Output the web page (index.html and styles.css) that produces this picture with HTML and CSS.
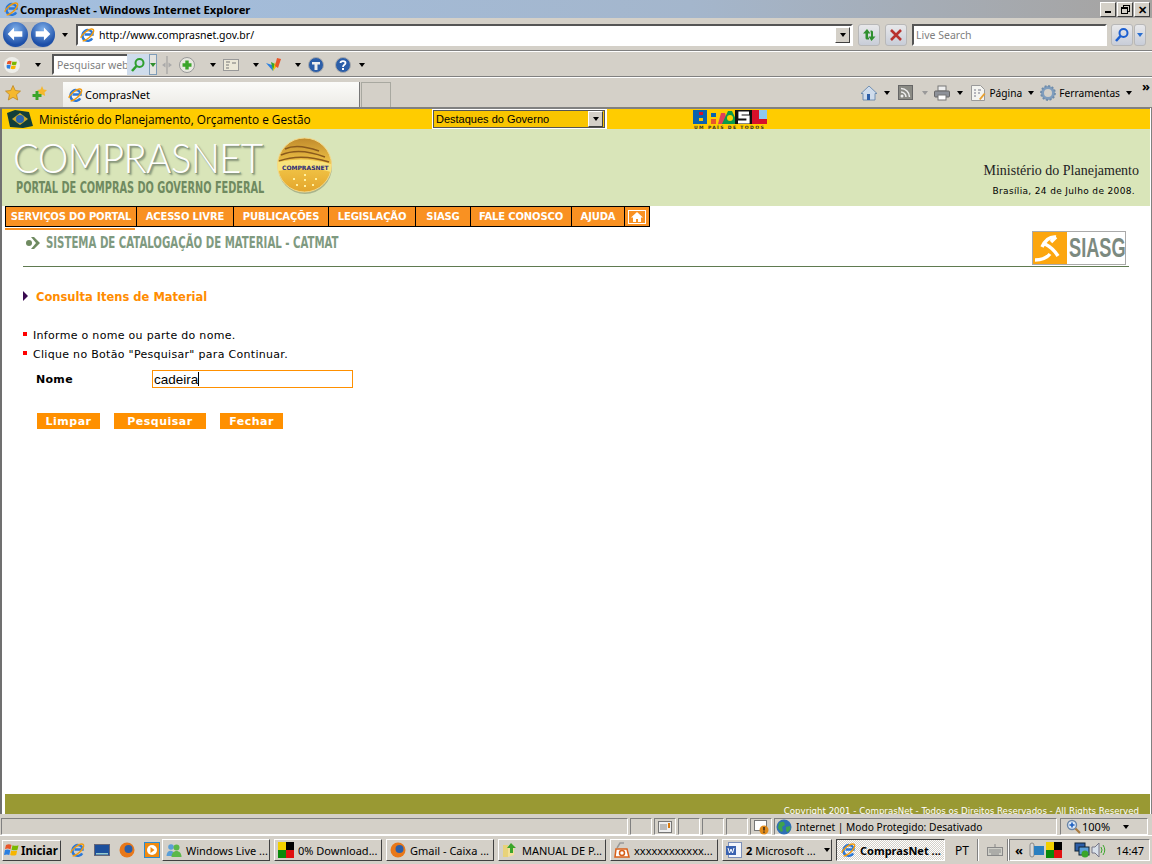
FILE: index.html
```html
<!DOCTYPE html>
<html lang="pt">
<head>
  <meta charset="UTF-8" />
  <title>ComprasNet - Windows Internet Explorer</title>
  <link rel="stylesheet" href="styles.css">
</head>
<body>

  <!-- icones -->
  <svg class="defs" width="0" height="0">
    <defs>
      <symbol id="ie" viewBox="0 0 16 16">
        <path d="M5.500 7.500h8C13.500 3.500 8.800 2 6 4 2.500 6.500 2.800 11.500 6 13.200c2.700 1.400 6 .5 7.200-1.800" fill="none" stroke="#2a78d8" stroke-width="2.400"/>
        <ellipse cx="8" cy="8" rx="8.300" ry="3.400" transform="rotate(-42 8 8)" fill="none" stroke="#f09a10" stroke-width="1.500" stroke-dasharray="17 5 14 0"/>
      </symbol>
      <symbol id="winflag" viewBox="0 0 16 16">
        <path d="M2 3q3-1.500 5.500 0l-1 4.500Q4 6 1 7z" fill="#e8562a"/>
        <path d="M8.500 3.200q3 1.200 6 0l-1 4.500q-3 1-6 0z" fill="#7ab800"/>
        <path d="M1 8q3-1 5.300.3l-1 4.700Q3 12 0 13z" fill="#2a7fe0"/>
        <path d="M7.200 8.500q3 1 6 0l-1 4.500q-3 1.200-6 0z" fill="#f7b500"/>
      </symbol>
      <symbol id="globe" viewBox="0 0 16 16">
        <circle cx="8" cy="8" r="7.500" fill="#2f6fb5"/>
        <path d="M3 4q3-2 5-1l1 3-3 2 1 4-2 1-3-4zM10 8l4-1 .5 3-3 3.500-1.500-2z" fill="#3fa34d"/>
      </symbol>
      <symbol id="glass" viewBox="0 0 16 16">
        <circle cx="9.500" cy="6" r="4" fill="none" stroke="currentColor" stroke-width="2"/>
        <path d="M6.500 9L2 14" stroke="currentColor" stroke-width="2.600"/>
      </symbol>
      <symbol id="navarrow" viewBox="0 0 24 24">
        <path d="M11 5l-7 7 7 7v-4h9V9h-9z" fill="#fff"/>
      </symbol>
    </defs>
  </svg>

  <div class="titlebar">
    <svg class="ico"><use href="#ie"/></svg>
    <span class="title-text">ComprasNet - Windows Internet Explorer</span>
    <div class="winbtns">
      <span class="winbtn"><i class="min-mark"></i></span>
      <span class="winbtn"><i class="max-mark"></i></span>
      <span class="winbtn close-mark">✕</span>
    </div>
  </div>

  <div class="addrbar">
    <div class="navbtns">
      <span class="navbtn"><svg width="22" height="22"><use href="#navarrow"/></svg></span>
      <span class="navbtn fwd"><svg width="22" height="22"><use href="#navarrow"/></svg></span>
    </div>
    <i class="caret nav-caret"></i>
    <div class="field addr-field">
      <svg class="ico"><use href="#ie"/></svg>
      <span class="addr-url">http://www.comprasnet.gov.br/</span>
      <span class="dropbtn"><i class="caret"></i></span>
    </div>
    <span class="toolbtn refresh-btn">
      <svg width="16" height="16" viewBox="0 0 16 16"><path d="M6 2L2 6.500h2.500V11q0 1.500 1.500 1.500h2v-2H7V6.500h2.500zM10.500 14l4-4.500H12V5q0-1.500-1.500-1.500h-1v2h.5v4H7.500z" fill="#2f8f2f"/></svg>
    </span>
    <span class="toolbtn stop-btn">
      <svg width="14" height="14" viewBox="0 0 14 14"><path d="M2 2l10 10M12 2L2 12" stroke="#b8322e" stroke-width="2.600"/></svg>
    </span>
    <div class="field live-field">Live Search</div>
    <span class="toolbtn live-go"><svg class="ico blue-ico"><use href="#glass"/></svg></span>
    <span class="toolbtn live-drop"><i class="caret caret-blue"></i></span>
  </div>

  <div class="linksbar">
    <svg class="ico win-ico"><use href="#winflag"/></svg>
    <i class="caret links-caret1"></i>
    <div class="field web-field">Pesquisar web</div>
    <span class="web-go"><svg class="ico green-ico"><use href="#glass"/></svg></span>
    <span class="web-drop"><i class="caret caret-green"></i></span>
    <svg class="grip" width="10" height="18" viewBox="0 0 10 18"><path d="M5 0v18" stroke="#999"/><path d="M3.500 6.500v5L0 9zM6.500 6.500v5L10 9z" fill="#aaa"/></svg>
    <svg class="ico plus-ico" viewBox="0 0 16 16"><circle cx="8" cy="8" r="7.500" fill="#e8e8e0" stroke="#999"/><path d="M8 3.500v9M3.500 8h9" stroke="#3aa52a" stroke-width="3.400"/></svg>
    <i class="caret links-caret2"></i>
    <svg class="ico card-ico" viewBox="0 0 16 16"><rect x=".5" y="2.500" width="15" height="11" fill="#ece8d8" stroke="#999"/><path d="M3 5h4M3 8h3M3 11h3M9 6h4" stroke="#777"/></svg>
    <i class="caret links-caret3"></i>
    <svg class="ico multi-ico" viewBox="0 0 16 16"><path d="M0 6l6 2 1 6z" fill="#2a7fe0"/><path d="M7 14L5 5l4 2z" fill="#3aa52a"/><path d="M7 14l2-9 2 4z" fill="#f7c500"/><path d="M9 9l2-8 4 1-3 9z" fill="#e8562a"/></svg>
    <i class="caret links-caret4"></i>
    <svg class="ico round-ico" viewBox="0 0 16 16"><circle cx="8" cy="8" r="7.500" fill="#2c5ea8" stroke="#aaa"/><path d="M4 5h8v2.500H9.500V13h-3V7.500H4z" fill="#eee"/></svg>
    <span class="round-gap"></span>
    <svg class="ico help-ico" viewBox="0 0 16 16"><circle cx="8" cy="8" r="7.500" fill="#2c5ea8" stroke="#aaa"/><path d="M5.500 6C5.500 3.500 10.500 3.500 10.500 6 10.500 7.800 8 7.800 8 10" fill="none" stroke="#fff" stroke-width="1.800"/><rect x="7" y="11" width="2" height="2" fill="#fff"/></svg>
    <i class="caret links-caret5"></i>
  </div>

  <div class="tabbar">
    <svg class="ico star-ico" viewBox="0 0 16 16"><path d="M8 .5l2.300 5 5.200.6-3.900 3.500 1.100 5.400L8 12.300 3.300 15l1.100-5.400L.5 6.100l5.200-.6z" fill="#f5b82e" stroke="#b8801a" stroke-width=".7"/></svg>
    <svg class="ico addstar-ico" viewBox="0 0 16 16"><path d="M10 1l1.500 3.500 3.500.5-2.500 2.500.7 3.500L10 9.500 6.800 11l.7-3.500L5 5l3.500-.5z" fill="#f5b82e"/><path d="M5 6v9M.5 10.500h9" stroke="#3aa52a" stroke-width="3"/></svg>
    <div class="tab">
      <svg class="ico"><use href="#ie"/></svg>
      <span>ComprasNet</span>
    </div>
    <div class="newtab"></div>
    <div class="cmds">
      <svg class="ico" viewBox="0 0 16 16"><path d="M8 1L0 8.500h2V15h12V8.500h2z" fill="#cfdcec" stroke="#5a7fa8" stroke-width=".8"/><rect x="6" y="9" width="3" height="6" fill="#2c5ea8"/></svg>
      <i class="caret cmd-caret1"></i>
      <svg class="ico rss-ico" viewBox="0 0 16 16"><rect x=".5" y=".5" width="14" height="14" fill="#8a8a84" stroke="#666"/><circle cx="4" cy="11" r="1.500" fill="#eee"/><path d="M3 7a5 5 0 0 1 5 5M3 3.500a8.500 8.500 0 0 1 8.500 8.500" fill="none" stroke="#eee" stroke-width="1.500"/></svg>
      <i class="caret caret-dim cmd-caret2"></i>
      <svg class="ico print-ico" viewBox="0 0 16 16"><rect x="4" y="1" width="8" height="5" fill="#eee" stroke="#777"/><rect x=".5" y="6" width="15" height="6" rx="1" fill="#8d9199" stroke="#666"/><rect x="4" y="10" width="8" height="5" fill="#fff" stroke="#777"/></svg>
      <i class="caret cmd-caret3"></i>
      <svg class="ico page-ico" viewBox="0 0 16 16"><path d="M1.500.5h9l4 4v11h-13z" fill="#f4f4f0" stroke="#9a9a9a"/><path d="M4 5h2M4 8h2M4 11h2M8 5h3M8 8h2" stroke="#778"/><path d="M9 14l5-6 1.500 1-5 6z" fill="#e8a030"/></svg>
      <span class="cmd-label">Página</span>
      <i class="caret cmd-caret4"></i>
      <svg class="ico gear-ico" viewBox="0 0 16 16"><circle cx="8" cy="8" r="5.500" fill="none" stroke="#7f9dbd" stroke-width="3"/><circle cx="8" cy="8" r="7" fill="none" stroke="#6f8caa" stroke-width="1.800" stroke-dasharray="2 1.660"/></svg>
      <span class="cmd-label">Ferramentas</span>
      <i class="caret cmd-caret5"></i>
      <span class="more">»</span>
    </div>
  </div>

  <div class="page">
    <div class="gov-bar">
      <svg class="flag-ico" width="26" height="18" viewBox="0 0 26 18"><path d="M0 3l8-3 14 2 4 14-10 2L3 17z" fill="#123f3a"/><path d="M5 9l8-6 8 6-8 6z" fill="#c9a92c"/><circle cx="13" cy="9" r="4" fill="#2a65b0"/></svg>
      <span class="gov-name">Ministério do Planejamento, Orçamento e Gestão</span>
      <div class="gov-select">
        <span>Destaques do Governo</span>
        <span class="dropbtn"><i class="caret"></i></span>
      </div>
      <svg class="brasil" width="75" height="20" viewBox="0 0 75 20">
        <rect x="0" y="1" width="14" height="14" fill="#0a62ad"/>
        <rect x="6" y="3" width="4" height="3" fill="#d8102a"/>
        <rect x="6" y="9" width="4" height="3" fill="#f7c500"/>
        <rect x="18" y="4" width="5" height="4" fill="#0a62ad"/>
        <rect x="18" y="10" width="5" height="5" fill="#e8562a"/>
        <path d="M25 15l3-11h4l3 11z" fill="#e0405a"/>
        <path d="M29 15l6-13h4l6 13z" fill="#0a9a4a"/>
        <circle cx="37" cy="9" r="3" fill="#f7d500"/>
        <rect x="42" y="1" width="17" height="14" fill="#111"/>
        <path d="M56 4H47v4h8v5H45" fill="none" stroke="#fff" stroke-width="3.200"/>
        <rect x="59" y="1" width="7" height="14" fill="#d8102a"/>
        <rect x="66" y="1" width="8" height="9" fill="#8fc8f0"/>
        <rect x="66" y="10" width="8" height="5" fill="#d8102a"/>
        <text x="1" y="20" class="brasil-sub">UM PAÍS DE TODOS</text>
      </svg>
    </div>

    <div class="banner">
      <div class="brand">
        <div class="brand-name">COMPRASNET</div>
        <div class="brand-sub">PORTAL DE COMPRAS DO GOVERNO FEDERAL</div>
      </div>
      <svg class="medal" width="56" height="58" viewBox="0 0 56 58">
        <defs>
          <linearGradient id="gold" x1="0" y1="0" x2="0" y2="1">
            <stop offset="0" stop-color="#c08a2c"/>
            <stop offset=".5" stop-color="#f2c648"/>
            <stop offset="1" stop-color="#e3a52c"/>
          </linearGradient>
        </defs>
        <circle cx="28" cy="30" r="27" fill="#a9b48c"/>
        <circle cx="27.500" cy="28" r="27" fill="url(#gold)" stroke="#f4d98a"/>
        <path d="M8 12q12-6 34 2M4 18q18-8 44 2M2 24q22-8 50 1" fill="none" stroke="#8a5a1c" stroke-width="1.500"/>
        <path d="M1 25q26-6 53 2v8q-26-7-53-1z" fill="#f8e27c"/>
        <text x="5" y="33" class="medal-text">COMPRASNET</text>
        <path d="M27 38h2M16 42h2M27 43h2M38 42h2M27 49h2M19 48h2M35 48h2" stroke="#fff0a0" stroke-width="2"/>
      </svg>
      <div class="banner-right">
        <div class="ministry">Ministério do Planejamento</div>
        <div class="today">Brasília, 24 de Julho de 2008.</div>
      </div>
    </div>

    <nav class="mainnav">
      <a class="nav-first">SERVIÇOS DO PORTAL</a>
      <a class="nav-acesso">ACESSO LIVRE</a>
      <a class="nav-pub">PUBLICAÇÕES</a>
      <a class="nav-leg">LEGISLAÇÃO</a>
      <a class="nav-siasg">SIASG</a>
      <a class="nav-fale">FALE CONOSCO</a>
      <a class="nav-ajuda">AJUDA</a>
      <a class="nav-home">
        <svg width="18" height="14" viewBox="0 0 18 14"><rect x=".5" y=".5" width="17" height="13" fill="none" stroke="#fff"/><path d="M9 2L3 7.500h2V12h3V9h2v3h3V7.500h2z" fill="#fff"/></svg>
      </a>
    </nav>
    <div class="nav-mark"></div>

    <div class="sys-head">
      <svg class="sys-arrow" width="14" height="12" viewBox="0 0 14 12"><circle cx="3" cy="6" r="3" fill="#6f8a60"/><path d="M5 0h3l6 6-6 6H5l5-6z" fill="#6f8a60"/></svg>
      <span class="sys-title">SISTEMA DE CATALOGAÇÃO DE MATERIAL - CATMAT</span>
      <div class="siasg">
        <svg width="34" height="32" viewBox="0 0 34 32"><rect width="34" height="32" fill="#fca60f"/><path d="M9 15q5-11 14-10M23 5l-5 5M12 12q8 4 13 12M2 28q10 0 15-6" fill="none" stroke="#fff" stroke-width="3.500"/></svg>
        <span>SIASG</span>
      </div>
    </div>

    <div class="content">
      <h2 class="section-title"><i class="tri"></i>Consulta Itens de Material</h2>
      <ul class="hints">
        <li>Informe o nome ou parte do nome.</li>
        <li>Clique no Botão "Pesquisar" para Continuar.</li>
      </ul>
      <div class="form-row">
        <label class="form-label">Nome</label>
        <div class="text-input">cadeira<i class="text-caret"></i></div>
      </div>
      <div class="actions">
        <button class="act act-small">Limpar</button>
        <button class="act act-big">Pesquisar</button>
        <button class="act act-small">Fechar</button>
      </div>
    </div>

    <footer class="page-foot">
      <span>Copyright 2001 - ComprasNet - Todos os Direitos Reservados - All Rights Reserved</span>
    </footer>
  </div>

  <div class="statusbar">
    <div class="cell cell-main"></div>
    <div class="cell cell-s"></div>
    <div class="cell cell-s"><svg class="ico" viewBox="0 0 16 16"><rect x="1.500" y="2.500" width="13" height="11" fill="#eee" stroke="#777"/><path d="M3 6h7M3 8h7M3 10h7" stroke="#888"/><path d="M12 4v5" stroke="#d87a10" stroke-width="2"/></svg></div>
    <div class="cell cell-s"></div>
    <div class="cell cell-s"></div>
    <div class="cell cell-s"></div>
    <div class="cell cell-s"><svg class="ico" viewBox="0 0 16 16"><rect x="1.500" y="1.500" width="12" height="10" fill="#fff" stroke="#777"/><circle cx="11" cy="11" r="4.500" fill="#e08a1a"/><path d="M11 8v3.500M11 12.500v1.200" stroke="#222" stroke-width="1.400"/></svg></div>
    <div class="cell cell-zone">
      <svg class="ico"><use href="#globe"/></svg>
      <span>Internet | Modo Protegido: Desativado</span>
    </div>
    <div class="cell cell-zoom">
      <svg class="ico" viewBox="0 0 16 16"><circle cx="7" cy="6" r="4.500" fill="#dce8f5" stroke="#6a86a8" stroke-width="1.400"/><path d="M7 3.500v5M4.500 6h5" stroke="#1c5fc0" stroke-width="1.600"/><path d="M10.500 9.500L15 14" stroke="#a87a40" stroke-width="2.200"/></svg>
      <span>100%</span>
      <i class="caret zoom-caret"></i>
    </div>
  </div>

  <div class="taskbar">
    <button class="start"><svg class="ico"><use href="#winflag"/></svg>Iniciar</button>
    <div class="quick">
      <svg class="ico"><use href="#ie"/></svg>
      <svg class="ico" viewBox="0 0 16 16"><rect x=".5" y="2.500" width="15" height="11" fill="#1c4f9c" stroke="#667"/><rect x="2" y="11" width="12" height="1.500" fill="#9cc"/></svg>
      <svg class="ico" viewBox="0 0 16 16"><circle cx="8" cy="8" r="7.500" fill="#e8781a"/><circle cx="9.500" cy="7" r="4" fill="#2c5ea8"/></svg>
      <svg class="ico" viewBox="0 0 16 16"><rect x=".5" y=".5" width="15" height="15" fill="#f08a10" stroke="#2c8ad0"/><circle cx="8" cy="8" r="5" fill="#fff"/><path d="M6.500 5l4 3-4 3z" fill="#f08a10"/></svg>
    </div>
    <div class="tasks">
      <button class="task"><svg class="ico" viewBox="0 0 16 16"><circle cx="5" cy="5" r="2.800" fill="#5a9fd8"/><path d="M.5 14c0-7 8-7 8 0z" fill="#5a9fd8"/><circle cx="10.500" cy="5.500" r="3" fill="#5bb84a"/><path d="M5.500 15c0-8 10-8 10 0z" fill="#5bb84a"/></svg><span>Windows Live ...</span></button>
      <button class="task"><svg class="ico" viewBox="0 0 16 16"><rect width="8" height="8" fill="#f2d000"/><rect x="8" width="8" height="8" fill="#000"/><rect y="8" width="8" height="8" fill="#0a8a0a"/><rect x="8" y="8" width="8" height="8" fill="#e01010"/></svg><span>0% Download...</span></button>
      <button class="task"><svg class="ico" viewBox="0 0 16 16"><circle cx="8" cy="8" r="7.500" fill="#e8781a"/><circle cx="9.500" cy="7" r="4" fill="#2c5ea8"/></svg><span>Gmail - Caixa ...</span></button>
      <button class="task"><svg class="ico" viewBox="0 0 16 16"><path d="M1 3h5v12H1z" fill="#e8d27a"/><path d="M6 15V5l6-2v10z" fill="#f2e09a"/><path d="M9 1l5 5h-3v5H8V6H5z" fill="#3aa52a"/></svg><span>MANUAL DE P...</span></button>
      <button class="task"><svg class="ico" viewBox="0 0 16 16"><path d="M2 7h11l2 8H1z" fill="#fff" stroke="#d8601a" stroke-width="1.500"/><circle cx="8" cy="11" r="2.500" fill="none" stroke="#d8601a" stroke-width="1.500"/><path d="M3 6l3-5h4" fill="none" stroke="#999" stroke-width="1.500"/></svg><span>xxxxxxxxxxxx...</span></button>
      <button class="task task-word"><svg class="ico" viewBox="0 0 16 16"><rect x="2.500" y=".5" width="13" height="15" fill="#f4f6fb" stroke="#7c8fb8"/><rect x="0" y="4" width="10" height="9" fill="#3a62b0"/><path d="M2 6l1.500 5 1.500-4 1.500 4L8 6" fill="none" stroke="#fff"/></svg><span><b>2</b> Microsoft ...</span><i class="caret"></i></button>
      <button class="task task-on"><svg class="ico"><use href="#ie"/></svg><span>ComprasNet ...</span></button>
    </div>
    <span class="lang">PT</span>
    <i class="tray-sep"></i>
    <svg class="ico kbd-ico" viewBox="0 0 16 16"><rect x=".5" y="5.500" width="15" height="8" fill="#cfcfc8" stroke="#888"/><path d="M2 8h12M2 10h12M4 12h8M8 2v3" stroke="#888"/></svg>
    <i class="tray-sep"></i>
    <div class="tray">
      <span class="tray-more">«</span>
      <svg class="ico" viewBox="0 0 16 16"><rect x="1" y="1" width="4" height="14" rx="2" fill="#d8d8d8" stroke="#888"/><rect x="5" y="4" width="10" height="9" fill="#2a7fc0"/></svg>
      <svg class="ico" viewBox="0 0 16 16"><rect width="8" height="8" fill="#f2d000"/><rect x="8" width="8" height="8" fill="#000"/><rect y="8" width="8" height="8" fill="#0a8a0a"/><rect x="8" y="8" width="8" height="8" fill="#e01010"/></svg>
      <svg class="ico tray-net" viewBox="0 0 16 16"><rect x="1" y="1" width="10" height="8" fill="#2c5ea8" stroke="#123"/><rect x="5" y="5" width="10" height="8" fill="#5a9fd8" stroke="#123"/><circle cx="11" cy="12" r="3.500" fill="#3aa52a"/></svg>
      <svg class="ico" viewBox="0 0 16 16"><path d="M1 5h3l4-4v14l-4-4H1z" fill="#d8e0ea" stroke="#778"/><path d="M10 5q2 3 0 6M12 3q3.500 5 0 10" fill="none" stroke="#3aa52a"/></svg>
      <span class="clock">14:47</span>
    </div>
  </div>

</body>
</html>
```
FILE: styles.css
```css
* {
  box-sizing: border-box;
}

html, body {
  height: 864px;
}

body {
  margin: 0;
  width: 1152px;
  overflow: hidden;
  display: flex;
  flex-direction: column;
  background-color: #d4d0c8;
  color: #000;
  font-family: "Noto Sans", "Open Sans", sans-serif;
  font-size: 11px;
}

.defs {
  position: absolute;
}

.ico {
  width: 16px;
  height: 16px;
  flex: none;
  display: block;
}

.caret {
  display: block;
  flex: none;
  width: 0;
  height: 0;
  border-left: 3.5px solid transparent;
  border-right: 3.5px solid transparent;
  border-top: 4px solid #000;
}

.caret-blue { border-top-color: #2a6fd0; }
.caret-green { border-top-color: #2f8f2f; }
.caret-dim { border-top-color: #999; }

/* Barra de titulo */
.titlebar {
  height: 18px;
  flex: none;
  display: flex;
  align-items: center;
  padding-left: 3px;
  background: linear-gradient(to right, #a3bfe0, #a4b6cc 60%, #a6a3a0);
}

.title-text {
  font-weight: 700;
  font-size: 11.25px;
  margin-left: 1px;
}

.winbtns {
  margin-left: auto;
  margin-right: 2px;
  display: flex;
  gap: 1px;
}

.winbtn {
  width: 16px;
  height: 15px;
  background-color: #d4d0c8;
  border: 1px solid;
  border-color: #fff #404040 #404040 #fff;
  display: flex;
  align-items: center;
  justify-content: center;
  font-size: 11px;
  font-weight: 700;
}

.min-mark {
  width: 6px;
  height: 2px;
  background-color: #000;
  margin-top: 6px;
}

.max-mark {
  width: 7px;
  height: 7px;
  border: 1px solid #000;
  border-top-width: 2px;
  margin: 2px 2px 0 0;
  box-shadow: 2px -2px 0 -1px #d4d0c8, 2px -2px 0 0 #000;
}

/* Barra de endereco */
.addrbar {
  height: 34px;
  flex: none;
  display: flex;
  align-items: center;
  padding-left: 3px;
  border-bottom: 1px solid #fff;
  box-shadow: inset 0 -1px 0 #808080;
}

.navbtns {
  display: flex;
  gap: 3px;
  width: 52px;
  height: 26px;
  border-radius: 13px;
  background-color: #bdbdbd;
}

.navbtn {
  width: 25px;
  height: 25px;
  border-radius: 50%;
  background: radial-gradient(circle at 50% 30%, #7fb0ea, #1d4fa8 70%);
  display: flex;
  align-items: center;
  justify-content: center;
}

.fwd svg {
  transform: scaleX(-1);
}

.nav-caret {
  margin-left: 7px;
}

.field {
  background-color: #fff;
  border: 2px solid;
  border-color: #555 #fff #fff #555;
  display: flex;
  align-items: center;
}

.addr-field {
  width: 777px;
  height: 22px;
  margin-left: 8px;
}

.addr-field .ico {
  margin-left: 1px;
}

.addr-url {
  margin-left: 4px;
  font-size: 10.5px;
  flex: 1;
}

.dropbtn {
  width: 15px;
  height: 16px;
  margin-right: 1px;
  flex: none;
  background-color: #d4d0c8;
  border: 1px solid;
  border-color: #fff #404040 #404040 #fff;
  display: flex;
  align-items: center;
  justify-content: center;
}

.toolbtn {
  height: 22px;
  flex: none;
  background: linear-gradient(#e8e8ea, #c8cdd8);
  border: 1px solid #b8b8b8;
  border-radius: 3px;
  display: flex;
  align-items: center;
  justify-content: center;
}

.refresh-btn { width: 22px; margin-left: 5px; }
.stop-btn { width: 22px; margin-left: 5px; }
.live-field {
  width: 195px;
  height: 22px;
  margin-left: 5px;
  padding-left: 2px;
  font-size: 10.5px;
  color: #808080;
}
.live-go { width: 22px; margin-left: 4px; }
.live-drop { width: 12px; margin-left: 1px; }
.blue-ico { color: #1c5fd0; }
.green-ico { color: #2f9f2f; }

/* Barra de links */
.linksbar {
  height: 26px;
  flex: none;
  display: flex;
  align-items: center;
  border-bottom: 1px solid #fff;
  box-shadow: inset 0 -1px 0 #808080;
  padding-left: 4px;
}

.win-ico {
  background-color: #eeeeea;
  border-radius: 50%;
  padding: 2px;
}

.links-caret1 { margin-left: 15px; }

.web-field {
  width: 75px;
  height: 21px;
  margin-left: 11px;
  padding-left: 3px;
  font-size: 10.5px;
  color: #808080;
  overflow: hidden;
  white-space: nowrap;
  border-right: 0;
}

.web-go {
  width: 22px;
  height: 21px;
  background-color: #cfdcec;
  display: flex;
  align-items: center;
  justify-content: center;
}

.web-drop {
  width: 8px;
  height: 21px;
  background-color: #e4e4e0;
  border: 1px solid #7f9db9;
  display: flex;
  align-items: center;
  justify-content: center;
}

.web-drop .caret {
  border-left-width: 3px;
  border-right-width: 3px;
}

.grip {
  flex: none;
  margin-left: 5px;
}

.plus-ico { margin-left: 7px; }
.links-caret2 { margin-left: 15px; }
.card-ico { margin-left: 7px; }
.links-caret3 { margin-left: 14px; }
.multi-ico { margin-left: 7px; }
.links-caret4 { margin-left: 13px; }
.round-ico { margin-left: 7px; }
.round-gap { width: 11px; }
.links-caret5 { margin-left: 8px; }

/* Barra de abas */
.tabbar {
  height: 30px;
  flex: none;
  display: flex;
  align-items: flex-end;
  padding-left: 5px;
  border-bottom: 1px solid #808080;
}

.star-ico, .addstar-ico {
  align-self: center;
}

.addstar-ico { margin-left: 11px; }

.tab {
  width: 297px;
  height: 25px;
  margin-left: 15px;
  padding-left: 4px;
  display: flex;
  align-items: center;
  gap: 2px;
  background: linear-gradient(#fbfbf9, #ecebe6);
  border-right: 1px solid #777;
}

.newtab {
  width: 30px;
  height: 25px;
  margin-left: 1px;
  border: 1px solid #a8a8a0;
  border-bottom: 0;
}

.cmds {
  margin-left: auto;
  align-self: stretch;
  display: flex;
  align-items: center;
  padding-right: 3px;
  position: relative;
}

.cmd-label {
  margin-left: 3px;
  font-size: 10.2px;
}

.cmd-caret1 { margin-left: 7px; }
.rss-ico { margin-left: 8px; }
.cmd-caret2 { margin-left: 8px; }
.print-ico { margin-left: 6px; }
.cmd-caret3 { margin-left: 7px; }
.page-ico { margin-left: 7px; }
.cmd-caret4 { margin-left: 6px; }
.gear-ico { margin-left: 6px; }
.cmd-caret5 { margin-left: 6px; margin-right: 17px; }

.more {
  position: absolute;
  right: 2px;
  top: -1px;
  font-size: 13px;
  font-weight: 700;
}

/* Pagina */
.page {
  height: 706px;
  flex: none;
  display: flex;
  flex-direction: column;
  background-color: #fff;
  margin-left: 2px;
  margin-right: 2px;
  border-top: 1px solid #808080;
  box-shadow: -2px 0 0 #707070, 1px 0 0 #fff, 2px 0 0 #808080;
  overflow: hidden;
}

.gov-bar {
  height: 20px;
  flex: none;
  display: flex;
  align-items: center;
  background-color: #ffcc00;
  padding-left: 5px;
  font-size: 12px;
}

.flag-ico { flex: none; }

.gov-name {
  margin-left: 6px;
  width: 393px;
  font-family: "Open Sans", sans-serif;
  font-size: 11.8px;
  white-space: nowrap;
}

.gov-select {
  width: 174px;
  height: 20px;
  display: flex;
  align-items: center;
  background-color: #f9c500;
  border: 2px solid #555;
  outline: 1px solid #fff;
  outline-offset: -1px;
  box-shadow: 1px 0 0 #fff;
  padding-left: 2px;
  font-family: "Liberation Sans", sans-serif;
  font-size: 11px;
  justify-content: space-between;
}

.brasil {
  margin-left: 87px;
  flex: none;
}

.brasil-sub {
  font-family: "DejaVu Sans", sans-serif;
  font-size: 4.500px;
  font-weight: 700;
  letter-spacing: 1.400px;
  fill: #333;
}

.banner {
  height: 77px;
  flex: none;
  display: flex;
  background-color: #d9e5b9;
  padding-left: 11px;
}

.brand {
  width: 255px;
  flex: none;
}

.brand-name {
  font-family: "Lato", sans-serif;
  font-weight: 300;
  font-size: 42px;
  line-height: 42px;
  margin-top: 7px;
  letter-spacing: -0.500px;
  color: #fff;
  text-shadow: 1px 1px 0 #8b9a80, 2px 2px 2px #7d8c70;
  white-space: nowrap;
  transform: scaleX(0.91);
  transform-origin: left center;
}

.brand-sub {
  font-family: "DejaVu Sans Condensed", sans-serif;
  font-weight: 700;
  font-size: 15.500px;
  line-height: 18px;
  margin-top: 1px;
  margin-left: 3px;
  color: #6f8a60;
  white-space: nowrap;
  transform: scaleX(0.7);
  transform-origin: left center;
}

.medal {
  margin: 8px 0 0 9px;
  flex: none;
}

.medal-text {
  font-family: "DejaVu Sans", sans-serif;
  font-weight: 700;
  font-size: 6px;
  fill: #2a2a7a;
}

.banner-right {
  margin-left: auto;
  padding-top: 34px;
  display: flex;
  flex-direction: column;
  align-items: flex-end;
}

.ministry {
  font-family: "Liberation Serif", serif;
  font-size: 14px;
  line-height: 15px;
  color: #222;
  margin-right: 11px;
}

.today {
  font-family: "DejaVu Sans", sans-serif;
  font-size: 9px;
  letter-spacing: 0.350px;
  margin-top: 8px;
  margin-right: 15px;
}

.mainnav {
  align-self: flex-start;
  margin-left: 3px;
  height: 21px;
  display: flex;
  background-color: #f99122;
  border: 1px solid #000;
  flex: none;
  font-family: "DejaVu Sans", sans-serif;
  font-size: 10px;
  letter-spacing: -0.150px;
  font-weight: 700;
  color: #fff;
}

.mainnav a {
  display: flex;
  align-items: center;
  justify-content: center;
  border-right: 1px solid #000;
  white-space: nowrap;
}

.mainnav a:last-child { border-right: 0; }

.nav-first { width: 131px; }
.nav-acesso { width: 97px; }
.nav-pub { width: 95px; }
.nav-leg { width: 87px; }
.nav-siasg { width: 55px; }
.nav-fale { width: 101px; }
.nav-ajuda { width: 53px; }
.nav-home { width: 24px; }

.nav-mark {
  width: 130px;
  height: 2px;
  margin: 1px 0 0 3px;
  flex: none;
  background-color: #f99122;
}

.sys-head {
  height: 36px;
  flex: none;
  margin: 1px 21px 0 21px;
  border-bottom: 1px solid #5f7a50;
  display: flex;
  align-items: flex-start;
  padding-left: 3px;
}

.sys-arrow {
  margin-top: 6px;
  flex: none;
}

.sys-title {
  margin-left: 6px;
  margin-top: 3px;
  width: 300px;
  font-family: "DejaVu Sans Condensed", sans-serif;
  font-weight: 700;
  font-size: 15.500px;
  color: #7f9a80;
  white-space: nowrap;
  transform: scaleX(0.73);
  transform-origin: left center;
}

.siasg {
  margin-left: auto;
  margin-right: 3px;
  width: 94px;
  height: 34px;
  display: flex;
  align-items: center;
  border: 1px solid #aaa;
  background-color: #fff;
}

.siasg svg {
  flex: none;
}

.siasg span {
  margin-left: 2px;
  font-family: "Liberation Sans", sans-serif;
  font-size: 28px;
  font-weight: 700;
  line-height: 30px;
  color: #7c8a80;
  transform: scaleX(0.65);
  transform-origin: left center;
}

.content {
  flex: 1;
  padding-left: 21px;
  font-family: "DejaVu Sans", sans-serif;
  font-size: 11px;
}

.section-title {
  margin: 22px 0 0;
  display: flex;
  align-items: center;
  font-size: 11.5px;
  font-weight: 700;
  line-height: 16px;
  color: #ff8c00;
}

.tri {
  width: 0;
  height: 0;
  margin-right: 8px;
  margin-top: -2px;
  border-top: 5px solid transparent;
  border-bottom: 5px solid transparent;
  border-left: 5px solid #3a0a50;
}

.hints {
  list-style: none;
  margin: 21px 0 0;
  padding: 0;
}

.hints li {
  height: 19px;
  line-height: 19px;
  padding-left: 10px;
  position: relative;
  letter-spacing: 0.300px;
  white-space: nowrap;
}

.hints li::before {
  content: "";
  position: absolute;
  left: 0;
  top: 6px;
  width: 4px;
  height: 4px;
  background-color: #f00;
}

.form-row {
  display: flex;
  align-items: center;
  margin-top: 6px;
  padding-left: 13px;
}

.form-label {
  width: 116px;
  font-weight: 700;
  letter-spacing: 0.300px;
}

.text-input {
  width: 201px;
  height: 18px;
  display: flex;
  align-items: center;
  padding-left: 1px;
  border: 1px solid #ff9000;
  font-family: "Liberation Sans", sans-serif;
  font-size: 13.5px;
}

.text-caret {
  width: 1px;
  height: 14px;
  background-color: #000;
}

.actions {
  display: flex;
  gap: 14px;
  margin: 25px 0 0 14px;
}

.act {
  height: 16px;
  padding: 0;
  border: 0;
  background-color: #ff9000;
  color: #fff;
  font-family: "DejaVu Sans", sans-serif;
  font-size: 11px;
  font-weight: 700;
  letter-spacing: 0.500px;
}

.act-small { width: 63px; }
.act-big { width: 92px; }

.page-foot {
  height: 20px;
  flex: none;
  margin-left: 3px;
  background-color: #999933;
  color: #fff;
  font-family: "DejaVu Sans", sans-serif;
  font-size: 8.650px;
  line-height: 10px;
  text-align: right;
  padding: 12px 11px 0 0;
  overflow: hidden;
  white-space: nowrap;
}

/* Barra de status */
.statusbar {
  height: 22px;
  flex: none;
  display: flex;
  gap: 2px;
  padding: 4px 2px 0 1px;
  border-bottom: 1px solid #fff;
  align-items: flex-start;
}

.cell {
  height: 17px;
  display: flex;
  align-items: center;
  border: 1px solid;
  border-color: #808080 #fff #fff #808080;
  flex: none;
}

.cell-main { width: 627px; }
.cell-s { width: 22px; justify-content: center; }
.cell-zone { width: 283px; gap: 4px; padding-left: 1px; font-size: 10.2px; }
.cell-zoom { width: 88px; margin-left: 1px; gap: 1px; padding-left: 4px; }
.zoom-caret { margin-left: 12px; }

/* Barra de tarefas */
.taskbar {
  flex: 1;
  display: flex;
  align-items: center;
  padding-left: 2px;
}

.start {
  width: 59px;
  height: 21px;
  padding: 0 0 0 1px;
  display: flex;
  align-items: center;
  gap: 1px;
  background-color: #d4d0c8;
  border: 1px solid;
  border-color: #fff #404040 #404040 #fff;
  font-family: "Noto Sans", sans-serif;
  font-size: 11.5px;
  font-weight: 700;
}

.quick {
  width: 101px;
  display: flex;
  gap: 9px;
  padding-left: 8px;
}

.tasks {
  display: flex;
  gap: 4px;
}

.task {
  width: 108px;
  height: 22px;
  padding: 0 0 0 3px;
  display: flex;
  align-items: center;
  gap: 4px;
  background-color: #d4d0c8;
  border: 1px solid;
  border-color: #fff #404040 #404040 #fff;
  font-family: "Noto Sans", sans-serif;
  font-size: 11px;
  white-space: nowrap;
  overflow: hidden;
}

.task-word { width: 110px; }
.task-word .caret { margin-left: 4px; }

.task-on {
  width: 109px;
  border-color: #404040 #fff #fff #404040;
  font-weight: 700;
  background-color: #eeece6;
  background-image: repeating-conic-gradient(#fff 0 25%, #d4d0c8 0 50%);
  background-size: 2px 2px;
}

.lang {
  margin-left: 10px;
  width: 22px;
  font-size: 12px;
}

.tray-sep {
  width: 2px;
  height: 22px;
  border-left: 1px solid #808080;
  border-right: 1px solid #fff;
  flex: none;
}

.kbd-ico { margin: 0 4px 0 8px; }

.tray {
  width: 141px;
  height: 22px;
  display: flex;
  align-items: center;
  gap: 1px;
  padding-left: 5px;
  border: 1px solid;
  border-color: #808080 #fff #fff #808080;
}

.tray-more {
  font-weight: 700;
  font-size: 13px;
  width: 13px;
}

.tray-net { margin-left: 11px; }

.clock {
  margin-left: 8px;
  font-size: 11px;
}
```
